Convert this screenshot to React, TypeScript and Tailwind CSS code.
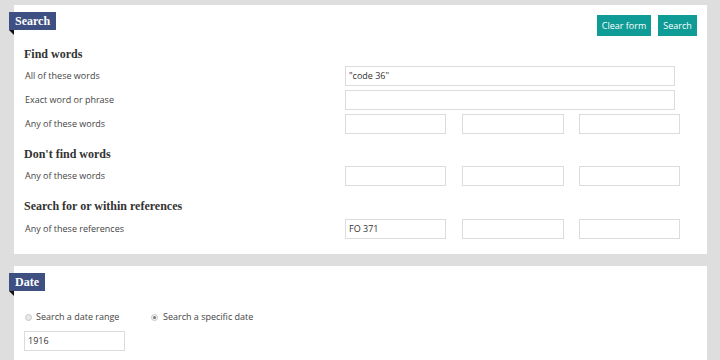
import React from "react";

const sans = { fontFamily: '"Open Sans", "Liberation Sans", sans-serif' };
const serif = { fontFamily: '"Liberation Serif", "DejaVu Serif", serif' };

function Tag({ text }: { text: string }) {
  return (
    <div className="absolute left-[-5px] top-[7px]">
      <div
        className="h-[18px] bg-[#3e5081] px-[6px] text-[12px] font-bold leading-[18px] text-white"
        style={serif}
      >
        {text}
      </div>
      <div className="h-0 w-0 border-l-[5px] border-t-[5px] border-l-transparent border-t-[#111]" />
    </div>
  );
}

function Input({ w, value }: { w: string; value?: string }) {
  return (
    <div
      className={`${w} h-[20px] border border-[#dcdcdc] bg-white pl-[3px] text-[9px] leading-[18px] text-[#333]`}
      style={sans}
    >
      {value}
    </div>
  );
}

function Label({ text }: { text: string }) {
  return (
    <div className="w-[321px] shrink-0 pl-[1px] text-[9px] text-[#444]" style={sans}>
      {text}
    </div>
  );
}

function Heading({ text }: { text: string }) {
  return (
    <div className="h-[16px] text-[12px] font-bold leading-[16px] text-[#333]" style={serif}>
      {text}
    </div>
  );
}

function TripleRow({ label, first }: { label: string; first?: string }) {
  return (
    <div className="flex h-[20px] items-center">
      <Label text={label} />
      <Input w="w-[101px]" value={first} />
      <div className="w-[16px]" />
      <Input w="w-[102px]" />
      <div className="w-[15px]" />
      <Input w="w-[101px]" />
    </div>
  );
}

export default function App() {
  return (
    <div className="h-[360px] w-[720px] overflow-hidden bg-[#dedede] pl-[14px] pr-[13px] pt-[5px]">
      <div className="relative h-[249px] bg-white px-[10px] pt-[10px]">
        <Tag text="Search" />
        <div className="flex h-[21px] justify-end gap-[7px]">
          <div
            className="h-[21px] w-[54px] bg-[#0f9c96] text-center text-[9px] leading-[21px] text-white"
            style={sans}
          >
            Clear form
          </div>
          <div
            className="h-[21px] w-[39px] bg-[#0f9c96] text-center text-[9px] leading-[21px] text-white"
            style={sans}
          >
            Search
          </div>
        </div>
        <div className="mt-[10px] flex flex-col">
          <Heading text="Find words" />
          <div className="mt-[4px] flex h-[20px] items-center">
            <Label text="All of these words" />
            <Input w="w-[330px]" value={'"code 36"'} />
          </div>
          <div className="mt-[4px] flex h-[20px] items-center">
            <Label text="Exact word or phrase" />
            <Input w="w-[330px]" />
          </div>
          <div className="mt-[4px]">
            <TripleRow label="Any of these words" />
          </div>
          <div className="mt-[12px]">
            <Heading text="Don't find words" />
          </div>
          <div className="mt-[4px]">
            <TripleRow label="Any of these words" />
          </div>
          <div className="mt-[12px]">
            <Heading text="Search for or within references" />
          </div>
          <div className="mt-[5px]">
            <TripleRow label="Any of these references" first="FO 371" />
          </div>
        </div>
      </div>
      <div className="relative mt-[12px] h-[200px] bg-white px-[10px] pt-[45px]">
        <Tag text="Date" />
        <div className="flex h-[12px] items-center text-[9px] text-[#444]" style={sans}>
          <div className="flex w-[127px] items-center">
            <div className="ml-[1px] h-[7px] w-[7px] rounded-full border border-[#c8c8c8] bg-[#e8e8e8]" />
            <span className="ml-[4px]">Search a date range</span>
          </div>
          <div className="flex items-center">
            <div className="flex h-[7px] w-[7px] items-center justify-center rounded-full border border-[#c8c8c8] bg-[#f4f4f4]">
              <div className="h-[3px] w-[3px] rounded-full bg-[#777]" />
            </div>
            <span className="ml-[5px]">Search a specific date</span>
          </div>
        </div>
        <div className="mt-[8px]">
          <Input w="w-[101px]" value="1916" />
        </div>
      </div>
    </div>
  );
}
